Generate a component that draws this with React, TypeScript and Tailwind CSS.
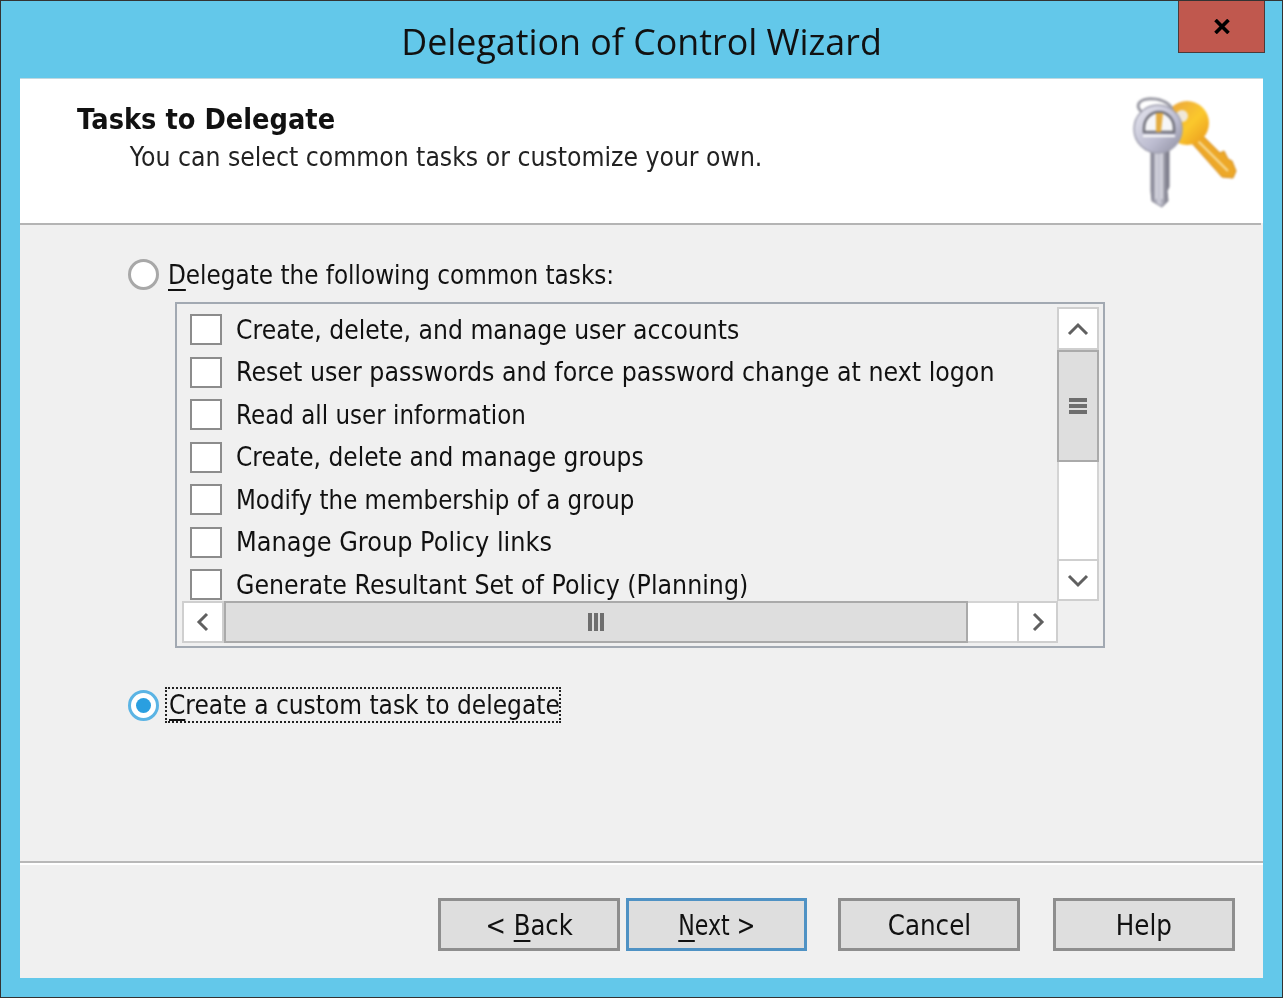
import React from "react";

const tasks = [
  { t: "Create, delete, and manage user accounts", c: "scale-x-[0.873]" },
  { t: "Reset user passwords and force password change at next logon", c: "scale-x-[0.88]" },
  { t: "Read all user information", c: "scale-x-[0.853]" },
  { t: "Create, delete and manage groups", c: "scale-x-[0.865]" },
  { t: "Modify the membership of a group", c: "scale-x-[0.852]" },
  { t: "Manage Group Policy links", c: "scale-x-[0.891]" },
  { t: "Generate Resultant Set of Policy (Planning)", c: "scale-x-[0.88]" },
];

function Chevron({ d }: { d: string }) {
  return (
    <svg width="24" height="24" viewBox="0 0 24 24" fill="none" stroke="#606060" strokeWidth="3">
      <path d={d} />
    </svg>
  );
}

function ScrollBtn({ d, className }: { d: string; className: string }) {
  return (
    <div className={"flex items-center justify-center bg-white border-2 border-[#cfcfcf] shrink-0 " + className}>
      <Chevron d={d} />
    </div>
  );
}

function Keys() {
  return (
    <svg width="108" height="118" viewBox="0 0 108 118" className="blur-[0.8px]">
      <defs>
        <linearGradient id="gold" x1="0" y1="0" x2="1" y2="1">
          <stop offset="0" stopColor="#e8a040" />
          <stop offset="0.55" stopColor="#fbc82c" />
          <stop offset="1" stopColor="#e8961c" />
        </linearGradient>
        <linearGradient id="silver" x1="0" y1="0" x2="1" y2="1">
          <stop offset="0" stopColor="#e8e8f0" />
          <stop offset="0.6" stopColor="#bcbcd0" />
          <stop offset="1" stopColor="#8e8ea0" />
        </linearGradient>
        <linearGradient id="shaft" x1="0" y1="0" x2="1" y2="0">
          <stop offset="0" stopColor="#80808f" />
          <stop offset="0.45" stopColor="#d0d0dc" />
          <stop offset="1" stopColor="#6c6c7a" />
        </linearGradient>
      </defs>
      {/* gold key */}
      <path d="M58 46 L68 38 L88 58 L92 56 L96 64 L100 66 L104 76 L101 83 L90 82 Z" fill="#eda828" stroke="#d08a1c" strokeWidth="1" />
      <path d="M66 46 L96 76" stroke="#f8e0a0" strokeWidth="2" fill="none" />
      <circle cx="55" cy="28" r="22" fill="url(#gold)" />
      <circle cx="50" cy="21" r="6" fill="#f0e8d8" />
      {/* ring */}
      <ellipse cx="23" cy="13" rx="17" ry="9" fill="none" stroke="#9a9aa4" strokeWidth="3" transform="rotate(10 23 13)" />
      {/* silver key */}
      <path d="M19 52 H37 V92 L35 96 L36 106 L30 112 L20 106 L19 96 Z" fill="url(#shaft)" stroke="#80808e" strokeWidth="1" />
      <path d="M24 56 V104 M30 56 V104" stroke="#eeeef4" strokeWidth="1.2" />
      <circle cx="26" cy="34" r="24" fill="url(#silver)" stroke="#a0a0b0" strokeWidth="1.5" />
      <path d="M12 33 A15 16 0 0 1 42 33 L42 37 L12 37 Z" fill="#f6f6f8" stroke="#70707a" strokeWidth="2.5" />
      <path d="M24 18 L31 18 L29 37 L24 37 Z" fill="#e4ac40" />
      <path d="M11 41 H43" stroke="#ffffff" strokeWidth="2" />
    </svg>
  );
}

function Radio({ on }: { on?: boolean }) {
  return (
    <div
      className={
        "w-[31px] h-[31px] rounded-full bg-white flex items-center justify-center border-[3px] shrink-0 " +
        (on ? "border-[#5bb4e4]" : "border-[#a8a8a8]")
      }
    >
      {on && <div className="w-[15px] h-[15px] rounded-full bg-[#2a9fe0]" />}
    </div>
  );
}

function Button({ children, primary, className }: { children: React.ReactNode; primary?: boolean; className: string }) {
  return (
    <div
      className={
        "h-[53px] flex items-center justify-center bg-[#dedede] border-[3px] text-[28px] pt-[2px] text-[#111] " +
        (primary ? "border-[#4f92c4] " : "border-[#8e8e8e] ") +
        className
      }
    >
      {children}
    </div>
  );
}

const u = "underline underline-offset-[5px] decoration-2";

export default function App() {
  return (
    <div
      className="w-[1283px] h-[998px] bg-[#63c8ea] border border-[#333333] flex flex-col text-[#111] overflow-hidden blur-[0.45px]"
      style={{ fontFamily: '"DejaVu Sans", sans-serif' }}
    >
      {/* title bar */}
      <div className="h-[77px] shrink-0 grid grid-cols-[1fr_auto_1fr] items-start">
        <div />
        <div className="text-[35.8px] leading-[50px] pt-[15px] text-[#111]" style={{ fontFamily: '"Open Sans", sans-serif' }}>
          Delegation of Control Wizard
        </div>
        <div className="flex justify-end pr-[17px]">
          <div className="w-[87px] h-[53px] bg-[#c0584e] border border-t-0 border-[#4a3a3a] flex items-center justify-center -mt-px">
            <svg width="16" height="15" viewBox="0 0 16 15" stroke="#000" strokeWidth="3.6" fill="none">
              <path d="M1.5 1 L14.5 14 M14.5 1 L1.5 14" />
            </svg>
          </div>
        </div>
      </div>

      {/* body */}
      <div className="flex-1 mx-[19px] mb-[19px] bg-[#f0f0f0] flex flex-col">
        {/* header */}
        <div className="h-[145px] bg-white flex justify-between shrink-0 border-t border-[#c0d8e0]">
          <div className="pl-[57px] pt-[23px]">
            <div className="text-[28px] leading-[36px] font-bold text-[#111] scale-x-[0.92] origin-left whitespace-nowrap">
              Tasks to Delegate
            </div>
            <div className="text-[26px] leading-[40px] pl-[58px] text-[#222] scale-x-[0.909] origin-left whitespace-nowrap -mt-px">
              You can select common tasks or customize your own.
            </div>
          </div>
          <div className="pr-[23px] pt-[16px]">
            <Keys />
          </div>
        </div>
        <div className="h-[2px] bg-[#b4b4b4] mr-[2px] shrink-0" />

        {/* main */}
        <div className="flex-1 pl-[108px] pt-[34px]">
          <div className="flex items-center h-[31px]">
            <Radio />
            <div className="ml-[9px] text-[27px] leading-[34px] scale-x-[0.858] origin-left whitespace-nowrap">
              <span className={u}>D</span>elegate the following common tasks:
            </div>
          </div>

          {/* list box */}
          <div className="ml-[47px] mt-[12px] w-[930px] h-[346px] border-2 border-[#a2a9b2] p-[3px] flex flex-col">
            <div className="flex h-[294px] shrink-0">
              <div className="flex-1 min-w-0 overflow-hidden pl-[10px] pt-[7px] flex flex-col gap-[11.5px]">
                {tasks.map(({ t, c }) => (
                  <div key={t} className="flex items-center h-[31px] shrink-0">
                    <div className="w-[32px] h-[31px] bg-white border-2 border-[#8c8c8c] shrink-0" />
                    <div className={"ml-[14px] text-[27px] leading-[34px] origin-left whitespace-nowrap " + c}>{t}</div>
                  </div>
                ))}
              </div>
              <div className="w-[42px] shrink-0 flex flex-col mr-[1px]">
                <ScrollBtn d="M3 17 L12 8 L21 17" className="h-[43px]" />
                <div className="h-[112px] bg-[#dedede] border-[2px] border-[#aaaaaa] flex flex-col items-center justify-center gap-[2px] shrink-0">
                  <div className="w-[18px] h-[4px] bg-[#6e6e6e]" />
                  <div className="w-[18px] h-[4px] bg-[#6e6e6e]" />
                  <div className="w-[18px] h-[4px] bg-[#6e6e6e]" />
                </div>
                <div className="flex-1 bg-white border-x-2 border-[#d4d4d4]" />
                <ScrollBtn d="M3 8 L12 17 L21 8" className="h-[42px]" />
              </div>
            </div>
            <div className="flex h-[42px] shrink-0">
              <ScrollBtn d="M16 4 L8 12 L16 20" className="w-[42px] ml-[2px]" />
              <div className="w-[744px] bg-[#dedede] border-[2px] border-[#aaaaaa] flex items-center justify-center gap-[2px] shrink-0">
                <div className="w-[4px] h-[18px] bg-[#6e6e6e]" />
                <div className="w-[4px] h-[18px] bg-[#6e6e6e]" />
                <div className="w-[4px] h-[18px] bg-[#6e6e6e]" />
              </div>
              <div className="w-[49px] bg-white border-y-2 border-[#d4d4d4]" />
              <ScrollBtn d="M8 4 L16 12 L8 20" className="w-[41px]" />
            </div>
          </div>

          {/* custom */}
          <div className="flex items-center h-[36px] mt-[39px]">
            <Radio on />
            <div className="ml-[6px] w-[396px] h-[36px] border-2 border-dotted border-[#222] flex items-center pl-[2px] whitespace-nowrap">
              <div className="text-[27px] leading-[34px] scale-x-[0.866] origin-left">
                <span className={u}>C</span>reate a custom task to delegate
              </div>
            </div>
          </div>
        </div>

        {/* footer */}
        <div className="h-[117px] shrink-0 border-t-2 border-[#b8b8b8] shadow-[inset_0_2px_0_#ffffff] pt-[35px] pl-[418px] flex items-start">
          <Button className="w-[182px]">
            <span className="scale-x-[0.87] whitespace-nowrap">
              &lt; <span className={u}>B</span>ack
            </span>
          </Button>
          <Button primary className="ml-[6px] w-[181px]">
            <span className="scale-x-[0.79] whitespace-nowrap">
              <span className={u}>N</span>ext &gt;
            </span>
          </Button>
          <Button className="ml-[31px] w-[182px]">
            <span className="scale-x-[0.88]">Cancel</span>
          </Button>
          <Button className="ml-[33px] w-[182px]">
            <span className="scale-x-[0.88]">Help</span>
          </Button>
        </div>
      </div>
    </div>
  );
}
